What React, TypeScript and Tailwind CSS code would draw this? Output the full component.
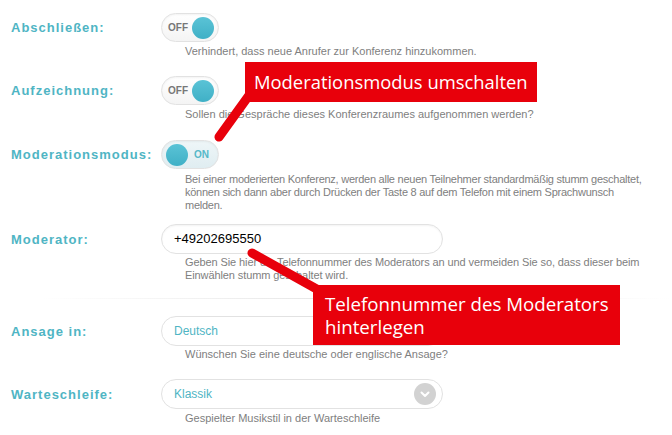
import React from "react";

const labelCls =
  "w-[161px] shrink-0 pl-[11px] text-[13px] font-bold tracking-[1px] text-[#4fb5c4] leading-none";
const descCls =
  "ml-[185px] w-[474px] text-[11px] leading-[13px] text-[#808080]";

function Toggle({ on }: { on: boolean }) {
  return (
    <div
      className={
        "flex items-center w-[58px] h-[29px] rounded-full border border-[#e2e2e2] px-[4px] shadow-[inset_0_1px_2px_rgba(0,0,0,0.05)] " +
        (on
          ? "bg-gradient-to-b from-[#eef6f8] to-[#e0edf1] justify-start gap-[6px]"
          : "bg-gradient-to-b from-white to-[#f4f4f4] justify-end gap-[4px]")
      }
    >
      {on ? (
        <>
          <div className="w-[22px] h-[22px] rounded-full bg-gradient-to-b from-[#5ac3d6] to-[#3fb0c6]" />
          <span className="text-[10px] font-bold text-[#56b8c8]">ON</span>
        </>
      ) : (
        <>
          <span className="text-[10px] font-bold text-[#777]">OFF</span>
          <div className="w-[22px] h-[22px] rounded-full bg-gradient-to-b from-[#5ac3d6] to-[#3fb0c6]" />
        </>
      )}
    </div>
  );
}

function Row({
  label,
  children,
}: {
  label: string;
  children: React.ReactNode;
}) {
  return (
    <div className="flex items-center">
      <div className={labelCls}>{label}</div>
      {children}
    </div>
  );
}

export default function App() {
  return (
    <div
      className="relative w-[672px] h-[435px] bg-white overflow-hidden"
      style={{ fontFamily: '"Liberation Sans", Arial, sans-serif' }}
    >
      <div className="flex flex-col pt-[13px]">
        <Row label="Abschließen:">
          <Toggle on={false} />
        </Row>
        <div className={descCls + " mt-[3px]"}>
          Verhindert, dass neue Anrufer zur Konferenz hinzukommen.
        </div>

        <div className="mt-[18px]">
          <Row label="Aufzeichnung:">
            <Toggle on={false} />
          </Row>
        </div>
        <div className={descCls + " mt-[3px]"}>
          Sollen die Gespräche dieses Konferenzraumes aufgenommen werden?
        </div>

        <div className="mt-[19px]">
          <Row label="Moderationsmodus:">
            <Toggle on={true} />
          </Row>
        </div>
        <div className="ml-[185px] w-[480px] text-[11px] leading-[13px] text-[#808080] mt-[4px] tracking-[-0.25px] whitespace-nowrap">
          Bei einer moderierten Konferenz, werden alle neuen Teilnehmer
          standardmäßig stumm geschaltet,
          <br />
          können sich dann aber durch Drücken der Taste 8 auf dem Telefon mit
          einem Sprachwunsch
          <br />
          melden.
        </div>

        <div className="mt-[12px]">
          <Row label="Moderator:">
            <div className="flex items-center w-[282px] h-[30px] rounded-full border border-[#e2e2e2] bg-white px-[12px] text-[13px] text-black shadow-[inset_0_1px_2px_rgba(0,0,0,0.05)]">
              +49202695550
            </div>
          </Row>
        </div>
        <div className={descCls + " mt-[2px] tracking-[-0.1px]"}>
          Geben Sie hier die Telefonnummer des Moderators an und vermeiden Sie
          so, dass dieser beim Einwählen stumm geschaltet wird.
        </div>

        <div className="mt-[16px] ml-[40px] w-[630px] h-px bg-gradient-to-r from-transparent via-[#e4e4e4] to-transparent" />

        <div className="mt-[17px]">
          <Row label="Ansage in:">
            <div className="flex items-center w-[282px] h-[30px] rounded-full border border-[#e2e2e2] bg-white px-[12px] text-[12px] text-[#4fb5c4]">
              Deutsch
            </div>
          </Row>
        </div>
        <div className={descCls + " mt-[2px]"}>
          Wünschen Sie eine deutsche oder englische Ansage?
        </div>

        <div className="mt-[18px]">
          <Row label="Warteschleife:">
            <div className="flex items-center justify-between w-[282px] h-[30px] rounded-full border border-[#e2e2e2] bg-white pl-[12px] pr-[6px] text-[12px] text-[#4fb5c4]">
              <span>Klassik</span>
              <div className="w-[22px] h-[22px] rounded-full bg-[#d2d2d2] flex items-center justify-center">
                <svg width="10" height="7" viewBox="0 0 10 7">
                  <path
                    d="M1.5 1.5 L5 5 L8.5 1.5"
                    fill="none"
                    stroke="white"
                    strokeWidth="2"
                    strokeLinecap="round"
                    strokeLinejoin="round"
                  />
                </svg>
              </div>
            </div>
          </Row>
        </div>
        <div className={descCls + " mt-[3px]"}>
          Gespielter Musikstil in der Warteschleife
        </div>
      </div>

      {/* callout lines */}
      <svg
        className="absolute left-0 top-0 pointer-events-none"
        width="672"
        height="435"
      >
        <line
          x1="250"
          y1="94"
          x2="219"
          y2="137"
          stroke="#e8000b"
          strokeWidth="9"
          strokeLinecap="round"
        />
        <line
          x1="252"
          y1="253"
          x2="322"
          y2="292"
          stroke="#e8000b"
          strokeWidth="9"
          strokeLinecap="round"
        />
      </svg>

      {/* callout 1 */}
      <div
        className="absolute left-[245px] top-[62px] w-[292px] h-[40px] bg-[#e8000b] flex items-center pl-[9px] text-white text-[18.4px]"
        style={{ fontFamily: '"Open Sans", sans-serif' }}
      >
        Moderationsmodus umschalten
      </div>

      {/* callout 2 */}
      <div
        className="absolute left-[313px] top-[285px] w-[307px] h-[60px] bg-[#e8000b] flex flex-col justify-center pl-[12px] text-white text-[18.7px] leading-[23px]"
        style={{ fontFamily: '"Open Sans", sans-serif' }}
      >
        <span>Telefonnummer des Moderators</span>
        <span>hinterlegen</span>
      </div>
    </div>
  );
}
